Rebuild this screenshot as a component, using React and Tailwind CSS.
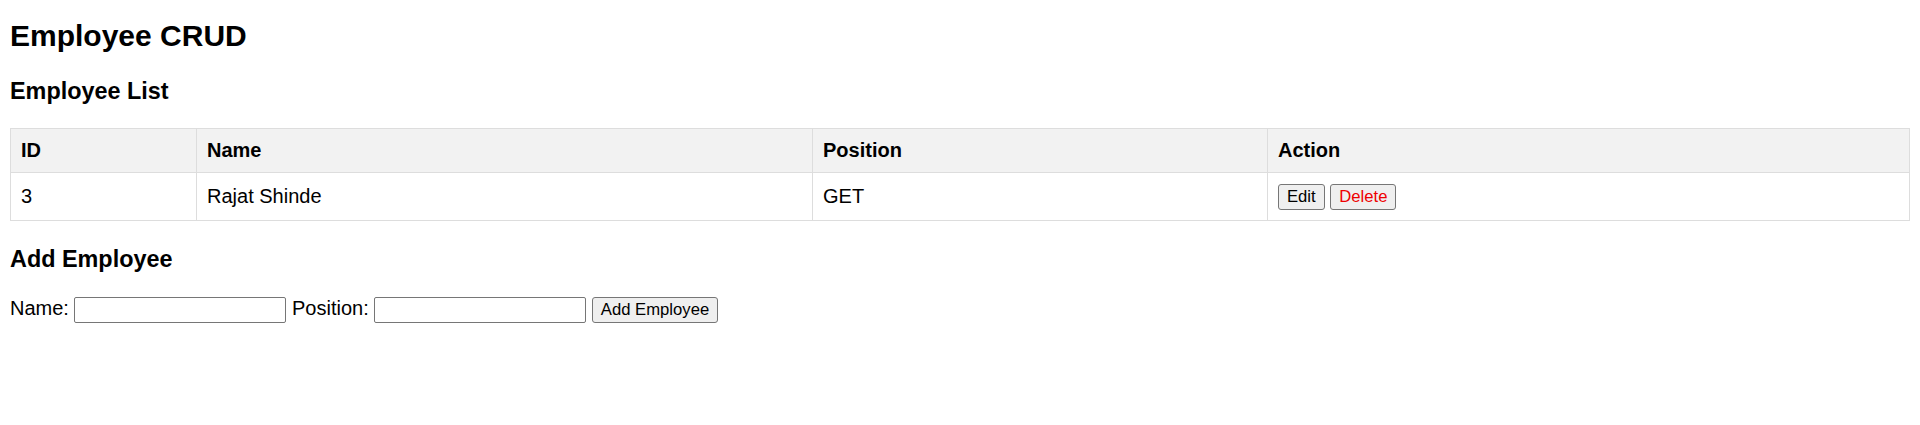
export default function App() {
  const employees = [{ id: 3, name: 'Rajat Shinde', position: 'GET' }];

  const th = 'border border-[#dddddd] px-[10px] py-[10px] text-left font-bold';
  const td = 'border border-[#dddddd] px-[10px] py-[10px] text-left';
  const btn =
    'inline-block h-[26px] px-[8px] text-[16.67px] leading-[24px] bg-[#efefef] border border-[#767676] rounded-[3px] align-baseline';

  return (
    <div className="min-h-[425px] bg-white px-[10px] pt-[18px] text-black font-['Liberation_Sans',Arial,sans-serif]">
      <h1 className="text-[30px] font-bold leading-[35px]">Employee CRUD</h1>

      <h3 className="mt-[25px] text-[23.4px] font-bold leading-[27px]">Employee List</h3>
      <table className="mt-[23px] w-full table-fixed border-collapse text-[20px] leading-[23px]">
        <colgroup>
          <col className="w-[186px]" />
          <col className="w-[616px]" />
          <col className="w-[455px]" />
          <col />
        </colgroup>
        <thead>
          <tr className="bg-[#f2f2f2]">
            <th className={th}>ID</th>
            <th className={th}>Name</th>
            <th className={th}>Position</th>
            <th className={th}>Action</th>
          </tr>
        </thead>
        <tbody>
          {employees.map((emp) => (
            <tr key={emp.id} className="h-[48px]">
              <td className={td}>{emp.id}</td>
              <td className={td}>{emp.name}</td>
              <td className={td}>{emp.position}</td>
              <td className={td}>
                <button className={btn}>Edit</button>{' '}
                <button className={`${btn} text-[#ee0000]`}>Delete</button>
              </td>
            </tr>
          ))}
        </tbody>
      </table>

      <h3 className="mt-[25px] text-[23.4px] font-bold leading-[27px]">Add Employee</h3>
      <div className="mt-[24px] text-[20px] leading-[23px]">
        <span>Name: </span>
        <input
          type="text"
          className="h-[26px] w-[212px] px-[2.5px] text-[16.67px] border border-[#767676] rounded-[2px] bg-white align-baseline"
        />{' '}
        <span>Position: </span>
        <input
          type="text"
          className="h-[26px] w-[212px] px-[2.5px] text-[16.67px] border border-[#767676] rounded-[2px] bg-white align-baseline"
        />{' '}
        <button className={btn}>Add Employee</button>
      </div>
    </div>
  );
}
